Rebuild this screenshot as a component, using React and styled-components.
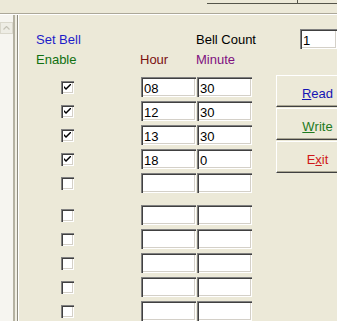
import React from 'react';
import styled, { createGlobalStyle } from 'styled-components';

const GlobalStyle = createGlobalStyle`
  html, body {
    margin: 0;
    padding: 0;
    background-color: #ECE9D8;
    overflow: hidden;
  }
  body {
    font-family: "Liberation Sans", Arial, sans-serif;
    font-size: 13px;
  }
`;

const Window = styled.div`
  display: flex;
  flex-direction: column;
  width: 337px;
  height: 321px;
  background-color: #ECE9D8;
  overflow: hidden;
`;

const TopStrip = styled.div`
  display: flex;
  height: 13px;
  padding-left: 207px;
`;

const TopFrame = styled.div`
  height: 3px;
  border-bottom: 1px solid #55554a;
  ${props => props.divided ? `
    width: 90px;
    border-right: 1px solid #55554a;
  ` : `
    flex: 1;
  `}
`;

const Divider = styled.div`
  height: 1px;
  background-color: #aca899;
  border-bottom: 1px solid #FFFFFF;
`;

const Body = styled.div`
  display: flex;
  flex: 1;
  min-height: 0;
`;

const SidePanel = styled.div`
  width: 15px;
  background-color: #F6F5F0;
  border-right: 2px solid #B5B2A2;
  padding-top: 7px;
  box-sizing: border-box;
`;

const ScrollButton = styled.div`
  display: flex;
  align-items: center;
  justify-content: center;
  width: 13px;
  height: 12px;
  background-color: #EEEDE5;
  border: 1px solid #DAD8CC;
  box-sizing: border-box;
`;

const Gutter = styled.div`
  width: 2px;
  background-color: #F1EFE4;
`;

const Content = styled.div`
  flex: 1;
  display: flex;
  flex-direction: column;
  border-left: 1px solid #8E8C80;
  box-shadow: inset 1px 0 0 #FFFFFF;
  padding: 14px 0 0 18px;
  min-width: 0;
  overflow: hidden;
`;

const HeaderRow = styled.div`
  display: flex;
  align-items: center;
  height: 20px;
  margin-top: ${props => props.offset || 0}px;
`;

const Label = styled.span`
  display: block;
  line-height: 15px;
  white-space: nowrap;
  color: ${props => props.color || '#000000'};
  width: ${props => props.width ? `${props.width}px` : 'auto'};
  flex-shrink: 0;
`;

const Sunken = styled.input`
  height: 20px;
  box-sizing: border-box;
  border: none;
  background-color: #FFFFFF;
  box-shadow: inset 1px 1px 0 #808080, inset 2px 2px 0 #404040,
    inset -1px -1px 0 #FFFFFF, inset -2px -2px 0 #D4D0C8;
  padding: 2px 0 0 3px;
  font-family: "Liberation Sans", Arial, sans-serif;
  font-size: 13px;
  color: #000000;
  outline: none;
  width: ${props => props.width ? `${props.width}px` : 'auto'};
  flex: ${props => props.width ? '0 0 auto' : '1'};
  min-width: 0;
`;

const Main = styled.div`
  display: flex;
  align-items: flex-start;
  margin-top: 10px;
`;

const Rows = styled.div`
  display: flex;
  flex-direction: column;
`;

const Row = styled.div`
  display: flex;
  align-items: center;
  height: 20px;
  margin-top: ${props => props.spaced ? 12 : 4}px;
  &:first-child {
    margin-top: 0;
  }
`;

const CheckCell = styled.div`
  width: 105px;
  padding-left: 25px;
  box-sizing: border-box;
  display: flex;
  align-items: center;
`;

const CheckBox = styled.div`
  width: 13px;
  height: 13px;
  box-sizing: border-box;
  background-color: #FFFFFF;
  box-shadow: inset 1px 1px 0 #808080, inset 2px 2px 0 #404040,
    inset -1px -1px 0 #FFFFFF, inset -2px -2px 0 #D4D0C8;
  display: flex;
  align-items: center;
  justify-content: center;
`;

const TimeFields = styled.div`
  display: flex;
  gap: 1px;
`;

const Buttons = styled.div`
  display: flex;
  flex-direction: column;
  gap: 1px;
  margin-left: 24px;
  margin-top: -2px;
`;

const Button = styled.div`
  display: flex;
  align-items: center;
  justify-content: center;
  width: 82px;
  flex-shrink: 0;
  height: 32px;
  box-sizing: border-box;
  background-color: #ECE9D8;
  border-top: 1px solid #FFFFFF;
  border-left: 1px solid #FFFFFF;
  border-bottom: 1px solid #404040;
  box-shadow: inset 0 -1px 0 #A9A693;
  color: ${props => props.color};
  padding-top: 4px;
`;

const Key = styled.span`
  text-decoration: underline;
`;

const Check = () => (
  <svg width="7" height="7" viewBox="0 0 7 7">
    <path d="M0 2 L0 4 L2 6 L7 1 L7 -1 L2 4 Z" fill="#000000" />
  </svg>
);

const rows = [
  { on: true, hour: '08', minute: '30' },
  { on: true, hour: '12', minute: '30' },
  { on: true, hour: '13', minute: '30' },
  { on: true, hour: '18', minute: '0' },
  { on: false, hour: '', minute: '' },
  { on: false, hour: '', minute: '', spaced: true },
  { on: false, hour: '', minute: '' },
  { on: false, hour: '', minute: '' },
  { on: false, hour: '', minute: '' },
  { on: false, hour: '', minute: '' },
];

export default function App() {
  return (
    <Window>
      <GlobalStyle />
      <TopStrip>
        <TopFrame divided />
        <TopFrame />
      </TopStrip>
      <Divider />
      <Body>
        <SidePanel>
          <ScrollButton>
            <svg width="7" height="4" viewBox="0 0 7 4">
              <path d="M0.5 3.5 L3.5 0.5 L6.5 3.5" fill="none" stroke="#C4C2B6" strokeWidth="1.2" />
            </svg>
          </ScrollButton>
        </SidePanel>
        <Gutter />
        <Content>
          <HeaderRow>
            <Label color="#1C1CC8" width={160}>Set Bell</Label>
            <Label width={104}>Bell Count</Label>
            <Sunken defaultValue="1" />
          </HeaderRow>
          <HeaderRow offset={3}>
            <Label color="#107010" width={104}>Enable</Label>
            <Label color="#7A1010" width={56}>Hour</Label>
            <Label color="#801080">Minute</Label>
          </HeaderRow>
          <Main>
            <Rows>
              {rows.map((row, index) => (
                <Row key={index} spaced={row.spaced}>
                  <CheckCell>
                    <CheckBox>{row.on && <Check />}</CheckBox>
                  </CheckCell>
                  <TimeFields>
                    <Sunken width={55} defaultValue={row.hour} />
                    <Sunken width={55} defaultValue={row.minute} />
                  </TimeFields>
                </Row>
              ))}
            </Rows>
            <Buttons>
              <Button color="#1414B4"><Key>R</Key>ead</Button>
              <Button color="#1E7A1E"><Key>W</Key>rite</Button>
              <Button color="#D01818">E<Key>x</Key>it</Button>
            </Buttons>
          </Main>
        </Content>
      </Body>
    </Window>
  );
}
